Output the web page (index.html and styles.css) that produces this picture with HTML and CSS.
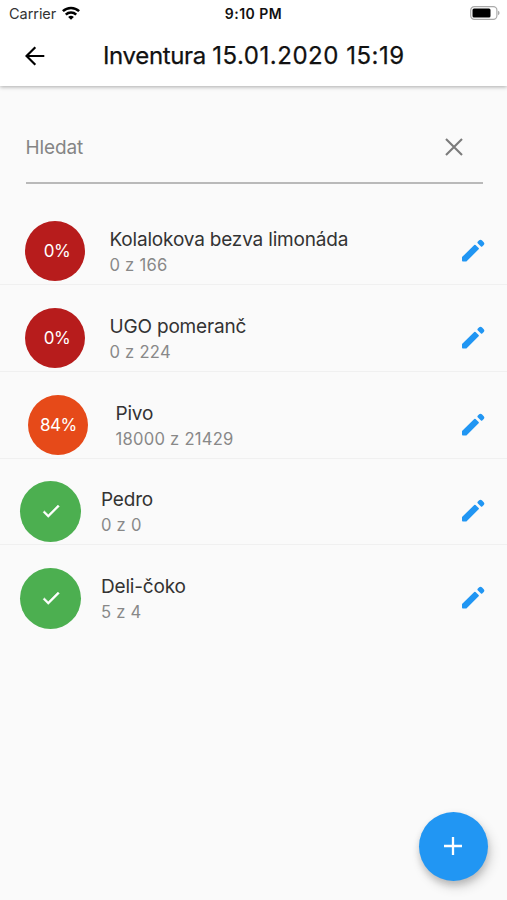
FILE: index.html
```html
<!DOCTYPE html>
<html lang="cs">
<head>
<meta charset="utf-8">
<meta name="viewport" content="width=device-width, initial-scale=1">
<title>Inventura</title>
<link rel="stylesheet" href="styles.css">
</head>
<body>
<svg class="sprite" width="0" height="0" aria-hidden="true">
  <symbol id="pencil" viewBox="0 0 24 24"><g stroke="#2196f3" stroke-width="1.800" stroke-linejoin="round"><path d="M1.900 18.500 13.900 6.600l3.100 3.100L5 21.600H1.900z"/><path d="m17.300 3.500 1.500-1.500q.7-.7 1.400 0l1.900 1.900q.7.700 0 1.400l-1.500 1.500z"/></g></symbol>
  <symbol id="check" viewBox="0 0 24 24"><path d="M9 16.170 4.830 12l-1.420 1.410L9 19 21 7l-1.410-1.410z" stroke="#fff" stroke-width=".6"/></symbol>
</svg>
<div class="screen">
  <header class="header">
    <div class="status">
      <div class="status-left">
        <span class="carrier">Carrier</span>
        <svg class="wifi" viewBox="0 0 18 14"><g fill="none" stroke="#000" stroke-width="2.500"><path d="M.9 5.200a11.600 11.600 0 0 1 16.200 0"/><path d="M3.800 8.700a7.400 7.400 0 0 1 10.400 0"/></g><path d="M9 13.800 6.100 10.900a4.400 4.400 0 0 1 5.800 0z"/></svg>
      </div>
      <span class="time">9:10 PM</span>
      <svg class="battery" viewBox="0 0 30 14"><rect x=".7" y=".7" width="26.200" height="12.600" rx="3.600" fill="#fff" stroke="#aaa" stroke-width="1.200"/><rect x="2.500" y="2.500" width="18" height="9" rx="1.500"/><path d="M28 4.800q1.600.6 1.600 2.200T28 9.200z" fill="#aaa"/></svg>
    </div>
    <div class="appbar">
      <svg class="back" viewBox="0 0 20 20"><path d="M19.300 10H1.800M10.300 1.200 1.500 10l8.800 8.800" fill="none" stroke="#000" stroke-width="2.200"/></svg>
      <h1 class="title">Inventura <span class="date">15.01.2020 15:19</span></h1>
    </div>
  </header>
  <main>
    <div class="search">
      <span class="hint">Hledat</span>
      <svg class="clear" viewBox="0 0 18 18"><path d="m1 1 16 16M17 1 1 17" stroke="#7b7b7b" stroke-width="2.100"/></svg>
    </div>
    <ul class="list">
      <li class="row">
        <div class="badge red"><span class="pct zero">0%</span></div>
        <div class="text"><div class="name">Kolalokova bezva limonáda</div><div class="count">0 z 166</div></div>
        <svg class="edit"><use href="#pencil"/></svg>
      </li>
      <li class="row">
        <div class="badge red"><span class="pct zero">0%</span></div>
        <div class="text"><div class="name">UGO pomeranč</div><div class="count">0 z 224</div></div>
        <svg class="edit"><use href="#pencil"/></svg>
      </li>
      <li class="row partial">
        <div class="badge orange"><span class="pct">84%</span></div>
        <div class="text"><div class="name">Pivo</div><div class="count">18000 z 21429</div></div>
        <svg class="edit"><use href="#pencil"/></svg>
      </li>
      <li class="row done">
        <div class="badge green"><svg class="check"><use href="#check"/></svg></div>
        <div class="text"><div class="name">Pedro</div><div class="count">0 z 0</div></div>
        <svg class="edit"><use href="#pencil"/></svg>
      </li>
      <li class="row done">
        <div class="badge green"><svg class="check"><use href="#check"/></svg></div>
        <div class="text"><div class="name">Deli-čoko</div><div class="count">5 z 4</div></div>
        <svg class="edit"><use href="#pencil"/></svg>
      </li>
    </ul>
  </main>
  <button class="fab" aria-label="Přidat"><svg viewBox="0 0 18 18"><path d="M9 0v18M0 9h18" stroke="#fff" stroke-width="2.300"/></svg></button>
</div>
</body>
</html>
```

FILE: styles.css
```css
* { box-sizing: border-box; }
body { margin: 0; background: #fafafa; font-family: Inter, "Liberation Sans", sans-serif; }
svg { display: block; flex: none; }
.sprite { position: absolute; }
.screen { position: relative; width: 507px; height: 900px; overflow: hidden; background: #fafafa; }
.header { height: 86px; background: #fff; box-shadow: 0 1px 4px rgba(0, 0, 0, .32); }
.status { display: grid; grid-template-columns: 1fr auto 1fr; align-items: center; height: 26px; padding: 0 7px 0 9px; }
.status-left { display: flex; align-items: center; gap: 6px; }
.carrier { font-size: 14.500px; line-height: 24px; padding-top: 2px; letter-spacing: -.05px; color: #333; }
.wifi { width: 18px; height: 14px; }
.time { font-size: 14px; font-weight: 600; line-height: 24px; padding-top: 2px; letter-spacing: .5px; margin-right: 2px; color: #111; }
.battery { width: 30px; height: 14px; justify-self: end; }
.appbar { display: flex; align-items: center; height: 60px; padding-left: 25px; }
.back { width: 20px; height: 20px; }
.title { margin: 0 0 0 58px; font-size: 24px; line-height: 30px; font-weight: 400; letter-spacing: -.35px; -webkit-text-stroke: .25px #111; color: #111; white-space: nowrap; }
.date { letter-spacing: .52px; }
.search { display: flex; align-items: center; justify-content: space-between; height: 74px; margin: 24px 24.500px 0 25.500px; padding: 2px 20px 0 0; border-bottom: 2px solid #b9b9b9; }
.hint { font-size: 19px; letter-spacing: -.1px; color: #858585; }
.clear { width: 18px; height: 18px; }
.list { list-style: none; margin: 14.250px 0 0; padding: 0; }
.row { display: flex; align-items: center; height: 86.750px; padding: 20px 22.500px 0 25.400px; border-bottom: 1px solid #f0f0f0; }
.row:last-child { border-bottom-color: transparent; }
.badge { display: flex; align-items: center; justify-content: center; flex: none; width: 60px; height: 60px; border-radius: 50%; }
.red { background: #b71c1c; }
.orange { background: #e64a19; }
.green { background: #4caf50; }
.pct { color: #fff; font-size: 17px; line-height: 22px; letter-spacing: -.5px; }
.zero { padding-left: 3px; }
.text { flex: 1; margin-left: 24.100px; padding-top: 2px; white-space: nowrap; }
.name { font-size: 19px; line-height: 26px; letter-spacing: -.18px; color: #333; }
.count { font-size: 16.600px; line-height: 24px; letter-spacing: .25px; color: #888; }
.partial { padding-left: 28.400px; }
.partial .text { margin-left: 27.100px; }
.done { padding-left: 20.400px; }
.done .badge { width: 61px; height: 61px; }
.done .text { margin-left: 19.600px; }
.check { width: 22px; height: 22px; fill: #fff; }
.edit { width: 24px; height: 24px; fill: #2196f3; }
.fab { position: absolute; left: 418.500px; top: 811.500px; width: 69px; height: 69px; padding: 0; border: 0; border-radius: 50%; background: #2196f3; display: grid; place-items: center; box-shadow: 0 4px 6px rgba(0, 0, 0, .14), 3px 6px 12px rgba(0, 0, 0, .16); }
.fab svg { width: 18px; height: 18px; }
```
